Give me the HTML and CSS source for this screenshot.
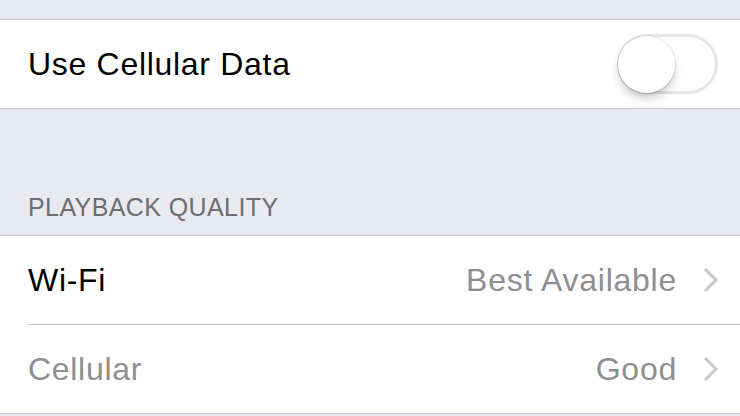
FILE: index.html
```html
<!DOCTYPE html>
<html lang="en">
<head>
  <meta charset="UTF-8">
  <meta name="viewport" content="width=device-width, initial-scale=1.0">
  <title>Playback Settings</title>
  <link rel="stylesheet" href="styles.css">
</head>
<body>
  <div class="screen">
    <div class="spacer-top"></div>

    <!-- Cellular toggle -->
    <div class="group">
      <div class="row">
        <span class="row-label">Use Cellular Data</span>
        <div class="switch">
          <div class="switch-knob"></div>
        </div>
      </div>
    </div>

    <!-- Playback quality -->
    <div class="section-header">PLAYBACK QUALITY</div>
    <div class="group">
      <div class="row">
        <span class="row-label">Wi-Fi</span>
        <div class="row-detail">
          <span class="row-value">Best Available</span>
          <svg class="chevron" width="15" height="26" viewBox="0 0 15 26" fill="none" xmlns="http://www.w3.org/2000/svg">
            <polyline points="2,2 13,13 2,24" stroke="#c7c7cc" stroke-width="3"/>
          </svg>
        </div>
      </div>
      <div class="separator"></div>
      <div class="row">
        <span class="row-label disabled">Cellular</span>
        <div class="row-detail">
          <span class="row-value">Good</span>
          <svg class="chevron" width="15" height="26" viewBox="0 0 15 26" fill="none" xmlns="http://www.w3.org/2000/svg">
            <polyline points="2,2 13,13 2,24" stroke="#c7c7cc" stroke-width="3"/>
          </svg>
        </div>
      </div>
    </div>
  </div>
</body>
</html>
```

FILE: styles.css
```css
/* Reset and base styles */
* {
  margin: 0;
  padding: 0;
  box-sizing: border-box;
}

body {
  font-family: "Liberation Sans", Arial, sans-serif;
  color: #000;
  background-color: #e9e9f0;
  width: 740px;
  height: 416px;
  overflow: hidden;
}

.spacer-top {
  height: 19px;
}

/* Grouped table */
.group {
  background-color: white;
  border-top: 1px solid #c8c7cc;
  border-bottom: 1px solid #c8c7cc;
}

.row {
  height: 88px;
  padding: 0 22px 0 28px;
  display: flex;
  align-items: center;
  justify-content: space-between;
}

.row-label {
  font-size: 32px;
  letter-spacing: 0.7px;
}

.row-label.disabled {
  color: #8e8e93;
}

.row-detail {
  display: flex;
  align-items: center;
  gap: 26px;
}

.row-value {
  font-size: 32px;
  letter-spacing: 0.75px;
  color: #8e8e93;
}

.chevron {
  display: block;
}

.separator {
  height: 1px;
  margin-left: 28px;
  background-color: #c8c7cc;
}

/* Section header */
.section-header {
  height: 126px;
  display: flex;
  align-items: flex-end;
  padding: 0 0 15px 28px;
  font-size: 25px;
  line-height: 25px;
  letter-spacing: 0.4px;
  color: #6d6d72;
}

/* Switch */
.switch {
  position: relative;
  width: 101px;
  height: 60px;
  border: 3px solid #e5e5ea;
  border-radius: 30px;
  background-color: white;
}

.switch-knob {
  position: absolute;
  left: -2px;
  top: -1px;
  width: 57px;
  height: 57px;
  border-radius: 50%;
  background-color: white;
  box-shadow: 0 0 0 1px rgba(0, 0, 0, 0.06), 0 6px 8px rgba(0, 0, 0, 0.18), 0 2px 2px rgba(0, 0, 0, 0.08);
}
```
